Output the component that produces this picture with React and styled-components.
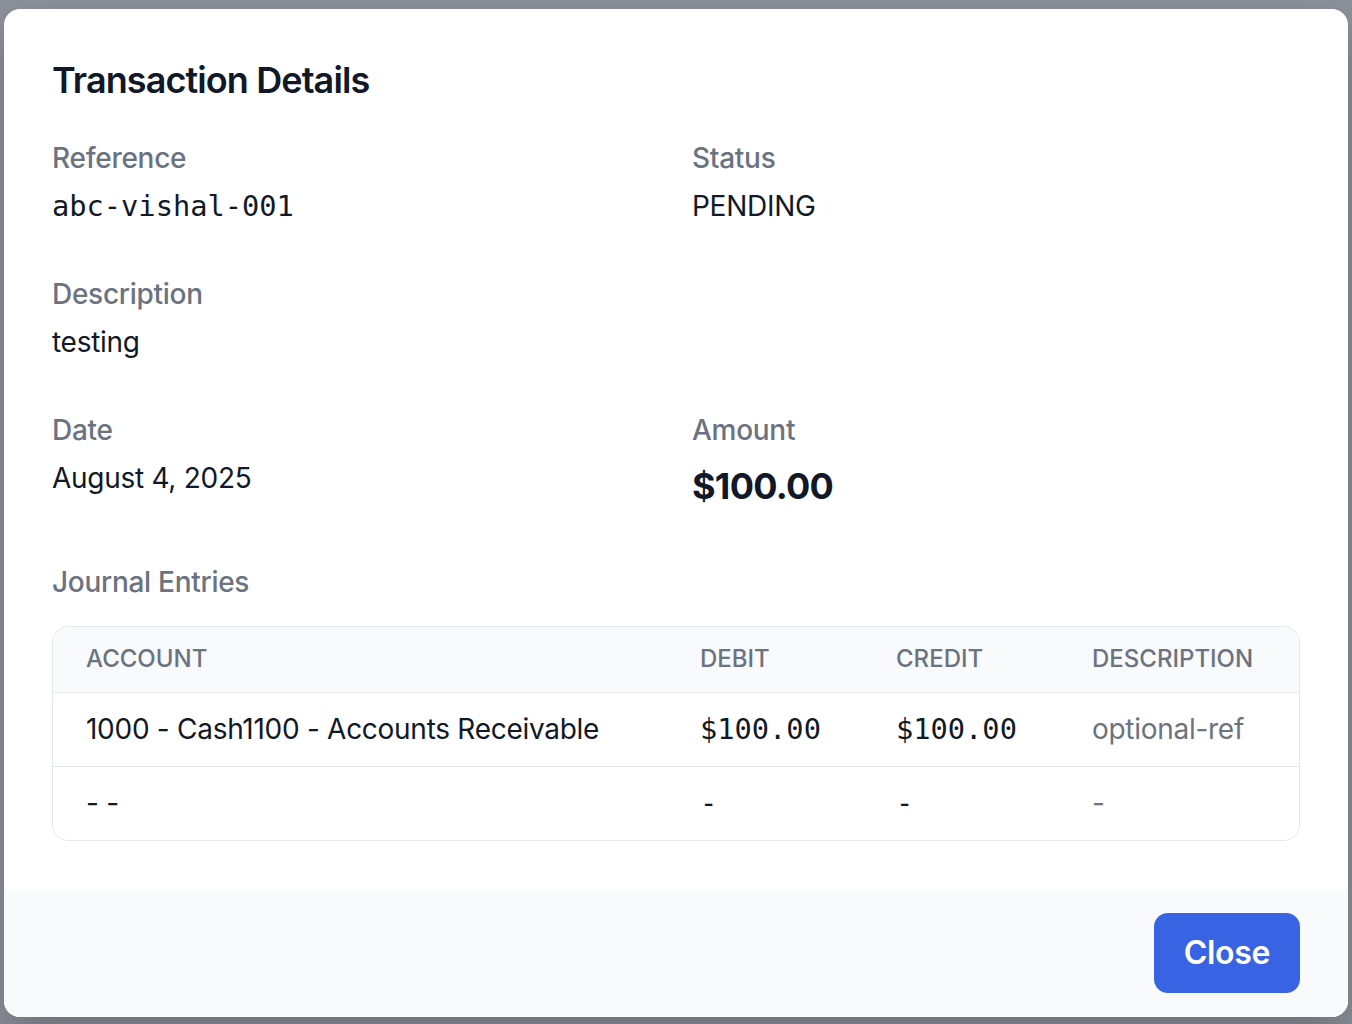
import styled, { createGlobalStyle } from "styled-components";

const GlobalStyle = createGlobalStyle`
  body {
    margin: 0;
    background: #8e929b;
    font-family: Inter, "Noto Sans", sans-serif;
  }
  * {
    box-sizing: border-box;
  }
`;

const MONO = '"DejaVu Sans Mono", "Liberation Mono", monospace';

const Backdrop = styled.div`
  min-height: 100vh;
  padding: 9px 4px 7px;
`;

const Modal = styled.div`
  background: #ffffff;
  border-radius: 16px;
  overflow: hidden;
  box-shadow: 0 20px 50px rgba(0, 0, 0, 0.25);
`;

const Body = styled.div`
  padding: 43px 48px 48px;
`;

const Title = styled.h3`
  margin: 0;
  font-size: 36px;
  line-height: 56px;
  font-weight: 600;
  letter-spacing: -0.025em;
  color: #111827;
`;

const Grid = styled.div`
  margin-top: 30px;
  display: grid;
  grid-template-columns: 1fr 1fr;
  column-gap: 32px;
  row-gap: 48px;
`;

const Field = styled.div`
  grid-column: ${(p) => (p.$full ? "span 2" : "auto")};
`;

const Label = styled.div`
  font-size: 28px;
  line-height: 40px;
  font-weight: 500;
  letter-spacing: -0.01em;
  color: #6b7280;
`;

const Value = styled.div`
  margin-top: 8px;
  color: #111827;
  font-family: ${(p) => (p.$mono ? MONO : "inherit")};
  font-size: ${(p) => (p.$large ? "36px" : p.$mono ? "28.7px" : "28px")};
  line-height: ${(p) => (p.$large ? "56px" : "40px")};
  font-weight: ${(p) => (p.$large ? 700 : 400)};
  letter-spacing: ${(p) => (p.$mono ? "0" : p.$large ? "-0.02em" : "-0.01em")};
`;

const Section = styled.div`
  margin-top: 48px;
`;

const TableWrap = styled.div`
  margin-top: 24px;
  border: 1px solid #e5e7eb;
  border-radius: 16px;
  overflow: hidden;
`;

const Row = styled.div`
  display: grid;
  grid-template-columns: 1fr 196px 196px 240px;
  background: ${(p) => (p.$head ? "#f9fafb" : "#ffffff")};
  & + & {
    border-top: 1px solid #e5e7eb;
  }
`;

const HeadCell = styled.div`
  padding: 16px 32px 17px 33px;
  font-size: 24px;
  line-height: 32px;
  font-weight: 500;
  text-transform: uppercase;
  color: #6b7280;
`;

const Cell = styled.div`
  padding: 16px 32px 17px 33px;
  font-size: ${(p) => (p.$mono ? "28.7px" : "28px")};
  line-height: 40px;
  white-space: nowrap;
  letter-spacing: ${(p) => (p.$mono ? "0" : "-0.01em")};
  color: ${(p) => (p.$muted ? "#6b7280" : "#111827")};
  font-family: ${(p) => (p.$mono ? MONO : "inherit")};
`;

const Footer = styled.div`
  background: #f9fafb;
  padding: 24px 48px;
  display: flex;
  justify-content: flex-end;
`;

const Button = styled.button`
  border: none;
  border-radius: 14px;
  background: #3864e3;
  color: #ffffff;
  font-family: inherit;
  font-size: 32px;
  line-height: 48px;
  font-weight: 600;
  letter-spacing: -0.01em;
  padding: 16px 30px;
  cursor: pointer;
`;

const entries = [
  { account: "1000 - Cash1100 - Accounts Receivable", debit: "$100.00", credit: "$100.00", description: "optional-ref" },
  { account: "- -", debit: "-", credit: "-", description: "-" },
];

export default function App() {
  return (
    <>
      <GlobalStyle />
      <Backdrop>
        <Modal>
          <Body>
            <Title>Transaction Details</Title>
            <Grid>
              <Field>
                <Label>Reference</Label>
                <Value $mono>abc-vishal-001</Value>
              </Field>
              <Field>
                <Label>Status</Label>
                <Value>PENDING</Value>
              </Field>
              <Field $full>
                <Label>Description</Label>
                <Value>testing</Value>
              </Field>
              <Field>
                <Label>Date</Label>
                <Value>August 4, 2025</Value>
              </Field>
              <Field>
                <Label>Amount</Label>
                <Value $large>$100.00</Value>
              </Field>
            </Grid>
            <Section>
              <Label>Journal Entries</Label>
              <TableWrap>
                <Row $head>
                  <HeadCell>Account</HeadCell>
                  <HeadCell>Debit</HeadCell>
                  <HeadCell>Credit</HeadCell>
                  <HeadCell>Description</HeadCell>
                </Row>
                {entries.map((e, i) => (
                  <Row key={i}>
                    <Cell>{e.account}</Cell>
                    <Cell $mono>{e.debit}</Cell>
                    <Cell $mono>{e.credit}</Cell>
                    <Cell $muted>{e.description}</Cell>
                  </Row>
                ))}
              </TableWrap>
            </Section>
          </Body>
          <Footer>
            <Button>Close</Button>
          </Footer>
        </Modal>
      </Backdrop>
    </>
  );
}
